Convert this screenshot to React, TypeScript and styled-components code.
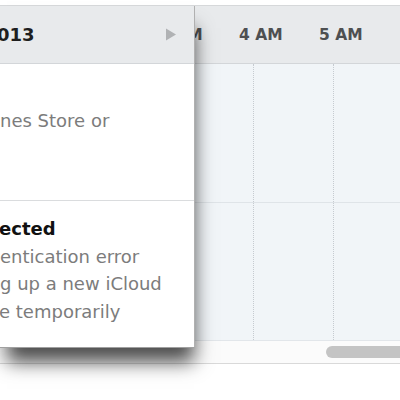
import React from "react";
import styled, { createGlobalStyle } from "styled-components";

const Global = createGlobalStyle`
  *, *::before, *::after { box-sizing: border-box; }
  html, body { margin: 0; padding: 0; background: #ffffff; }
  body { font-family: "DejaVu Sans", "Liberation Sans", sans-serif; }
`;

const Page = styled.div`
  position: relative;
  width: 400px;
  height: 400px;
  overflow: hidden;
  background: #ffffff;
`;

const Calendar = styled.div`
  margin-top: 5px;
  border-top: 1px solid #d6d8da;
  display: flex;
  flex-direction: column;
`;

const Header = styled.div`
  height: 58px;
  background: #e8eaec;
  border-bottom: 1px solid #d3d6d9;
  display: flex;
  align-items: center;
  padding-left: 159px;
`;

const HourLabel = styled.div`
  flex: 0 0 80px;
  font-size: 15.5px;
  font-weight: bold;
  color: #4e5052;
  padding-top: 1px;
`;

const Body = styled.div`
  height: 277px;
  background: #f1f5f8;
  border-bottom: 1px solid #e2e6ea;
  display: flex;
  flex-direction: column;
`;

const Row = styled.div`
  flex: 1;
  display: flex;
  padding-left: 173px;
  border-bottom: 1px solid #dfe4e8;
  &:last-child { border-bottom: none; }
`;

const Column = styled.div`
  flex: 0 0 80px;
  border-left: 1px dotted #c6cbd0;
`;

const ScrollArea = styled.div`
  height: 23px;
  background: #fbfbfb;
  border-bottom: 1px solid #d9d9d9;
  display: flex;
  align-items: center;
  padding-left: 326px;
`;

const Thumb = styled.div`
  flex: 1;
  height: 12px;
  background: #c4c4c4;
  border-radius: 6px 0 0 6px;
`;

const Popup = styled.div`
  position: absolute;
  left: 0;
  top: 6px;
  width: 195px;
  height: 342px;
  background: #ffffff;
  border-right: 1px solid #b0b0b0;
  border-bottom: 1px solid #a0a0a0;
  box-shadow: 3px 18px 18px -4px rgba(0, 0, 0, 0.7);
  display: flex;
  flex-direction: column;
  overflow: hidden;
`;

const PopupHeader = styled.div`
  height: 58px;
  flex: 0 0 58px;
  background: #e8eaec;
  border-bottom: 1px solid #d3d6d9;
  display: flex;
  align-items: center;
  justify-content: space-between;
  padding-right: 17px;
`;

const Title = styled.div<{ $shift: number }>`
  font-size: 18px;
  font-weight: bold;
  color: #1e1e1e;
  margin-left: ${(p) => p.$shift}px;
`;

const Section = styled.div<{ $pad: number; $basis?: number }>`
  padding-top: ${(p) => p.$pad}px;
  flex: ${(p) => (p.$basis ? `0 0 ${p.$basis}px` : "1")};
  border-bottom: 1px solid #dadcde;
  &:last-child { border-bottom: none; }
`;

const Line = styled.div<{ $shift: number; $strong?: boolean }>`
  font-size: 18px;
  line-height: 27.5px;
  white-space: nowrap;
  color: ${(p) => (p.$strong ? "#111111" : "#7c7c7c")};
  font-weight: ${(p) => (p.$strong ? "bold" : "normal")};
  margin-left: ${(p) => p.$shift}px;
`;

const Arrow = () => (
  <svg width="12" height="13" viewBox="0 0 12 13">
    <path d="M1 0.5 L11 6.5 L1 12.5 Z" fill="#b0b2b4" />
  </svg>
);

export default function App() {
  return (
    <>
      <Global />
      <Page>
        <Calendar>
          <Header>
            <HourLabel>3 AM</HourLabel>
            <HourLabel>4 AM</HourLabel>
            <HourLabel>5 AM</HourLabel>
          </Header>
          <Body>
            <Row>
              <Column />
              <Column />
              <Column />
            </Row>
            <Row>
              <Column />
              <Column />
              <Column />
            </Row>
          </Body>
          <ScrollArea>
            <Thumb />
          </ScrollArea>
        </Calendar>
        <Popup>
          <PopupHeader>
            <Title $shift={-3}>013</Title>
            <Arrow />
          </PopupHeader>
          <Section $pad={43} $basis={137}>
            <Line $shift={0}>nes Store or</Line>
          </Section>
          <Section $pad={14}>
            <Line $shift={-1} $strong>ected</Line>
            <Line $shift={0}>entication error</Line>
            <Line $shift={0}>g up a new iCloud</Line>
            <Line $shift={-1}>e temporarily</Line>
          </Section>
        </Popup>
      </Page>
    </>
  );
}
